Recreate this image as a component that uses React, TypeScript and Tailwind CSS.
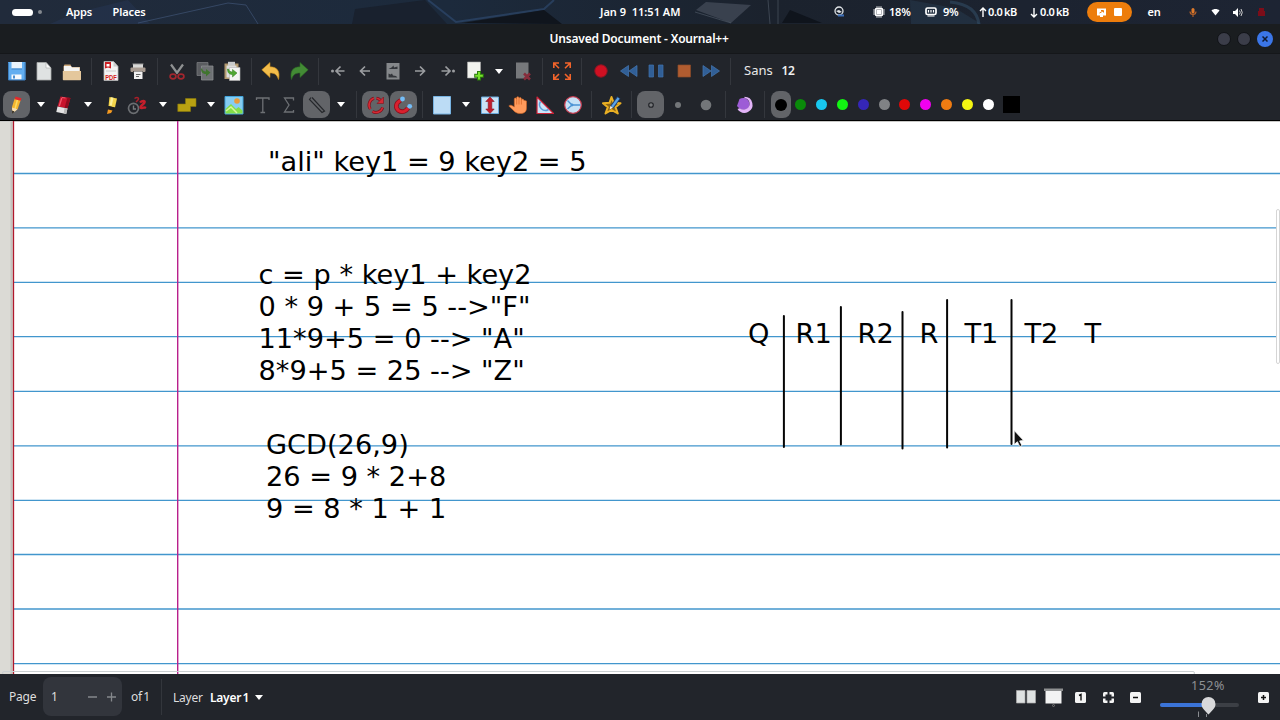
import React from 'react';
import clsx from 'clsx';

type IconProps = { children: React.ReactNode; size?: number; className?: string };

// every toolbar glyph is drawn on a 20x20 grid
function Icon({ children, size = 20, className }: IconProps) {
  return (
    <svg width={size} height={size} viewBox="0 0 20 20" fill="none" className={clsx('shrink-0', className)}>
      {children}
    </svg>
  );
}

function Slot({ children, active }: { children: React.ReactNode; active?: boolean }) {
  return (
    <button className="w-[27.5px] h-[27px] shrink-0 flex items-center justify-center">
      <span className={clsx('w-[27px] h-[27px] shrink-0 rounded-lg flex items-center justify-center', active && 'bg-[#626468]')}>
        {children}
      </span>
    </button>
  );
}

function Sep({ className = 'w-[11.5px]' }: { className?: string }) {
  return (
    <div className={clsx('shrink-0 flex justify-center', className)}>
      <div className="w-px h-[27px] bg-[#34373d]" />
    </div>
  );
}

function Caret() {
  return (
    <div className="w-5 shrink-0 flex justify-center">
      <svg width="8" height="5" viewBox="0 0 8 5"><path d="M0 0h8L4 5z" fill="#fff" /></svg>
    </div>
  );
}

const SaveIcon = () => (
  <Icon>
    <path d="M1 1h17.500v18H1z" fill="#62aef0" />
    <path d="M4.500 1h10.500v6.500H4.500z" fill="#e9f3fb" /><path d="M4.500 7.500h10.500v1H4.500z" fill="#3f82c4" />
    <path d="M4.500 13.500h10v5h-10z" fill="#f5f9fc" /><path d="M6 14.500h2v3H6z" fill="#4b8fd0" />
    <path d="M1.500 1.500v17.500h16.500v-17.500" stroke="#3d7fc0" />
  </Icon>
);
const NewIcon = () => (
  <Icon>
    <path d="M3 1.500h9l5 5.500v12H3z" fill="#dfe2e2" stroke="#a8abab" strokeWidth=".8" />
    <path d="M12 1.500V7h5z" fill="#fafafa" stroke="#a8abab" strokeWidth=".6" />
  </Icon>
);
const OpenIcon = () => (
  <Icon>
    <path d="M1.500 5.500l1-2h6l1 2.500h8.500v13H1.500z" fill="#cba678" /><path d="M2 5h7l1 1.500h7.500v4H2z" fill="#f4f4f2" />
    <path d="M.8 10h18.200v8.500q0 .7-.7.700H1.500q-.7 0-.7-.7z" fill="#e4c79c" />
  </Icon>
);
const PdfIcon = () => (
  <Icon>
    <path d="M3 .5h9.500l4.500 5v14H3z" fill="#f3f3f3" stroke="#b5b5b5" strokeWidth=".8" />
    <path d="M12.500.5v5H17z" fill="#ccc" /><path d="M4 1h6v6.500L7 6.500 4 7.500z" fill="#cc1e22" />
    <path d="M5.500 3h3v2.500h-3z" fill="#fff" /><path d="M5 10h10" stroke="#ccc" />
    <text x="10" y="18.500" textAnchor="middle" fontSize="7" fontWeight="700" textLength="11.5" lengthAdjust="spacingAndGlyphs" fontFamily="Liberation Sans, sans-serif" fill="#d4181c">PDF</text>
  </Icon>
);
const PrintIcon = () => (
  <Icon>
    <path d="M5 3h10v5H5z" fill="#d8d8d6" /><path d="M4.500 3h11" stroke="#9b9b9b" />
    <rect x="2.500" y="6.500" width="15" height="4.500" rx="1" fill="#a89b91" /><path d="M5 10h10v2H5z" fill="#4a4542" />
    <path d="M6 10.500h8.500v7.500H6z" fill="#f1f1f1" /><path d="M8 13.500h4.500M8 15.500h3" stroke="#666" />
  </Icon>
);
const CutIcon = () => (
  <Icon>
    <path d="M4 3.500l6.500 9M16 3.500l-6.500 9" stroke="#8f9192" strokeWidth="2.200" />
    <ellipse cx="6" cy="15.500" rx="2.900" ry="2.300" stroke="#a3262e" strokeWidth="1.700" /><ellipse cx="14" cy="15.500" rx="2.900" ry="2.300" stroke="#a3262e" strokeWidth="1.700" />
  </Icon>
);
const CopyIcon = () => (
  <Icon>
    <path d="M2 1.500h11v13H2z" fill="#5a5c60" stroke="#77797c" strokeWidth=".8" />
    <path d="M6.500 5h11.500v14H6.500z" fill="#6e7174" stroke="#8c8e90" strokeWidth=".8" />
    <path d="M6 7.500c0 4 2 5.500 5 5.500v2.500l4.500-4L11 8v2.500C9 10.500 7.500 9.500 7 7.500z" fill="#40752f" />
  </Icon>
);
const PasteIcon = () => (
  <Icon>
    <path d="M2.500 2.500h14V18h-14z" fill="#b39a70" /><path d="M6 .8h7v4H6z" fill="#c9cbcb" />
    <path d="M4.500 4.500h10v12h-10z" fill="#ddd" /><path d="M7.500 6.500H18v13H7.500z" fill="#f3f4f2" stroke="#b5b5b5" strokeWidth=".6" />
    <path d="M5.500 8c0 4 2 5.500 5 5.500v2.500l4.500-4-4.500-3.500v2.500C8.500 11 7 10 6.500 8z" fill="#50a832" stroke="#2e7c1c" strokeWidth=".5" />
  </Icon>
);
const Undo = ({ color, edge, flip }: { color: string; edge: string; flip?: boolean }) => (
  <Icon className={flip ? '-scale-x-100' : ''}>
    <path d="M9 1.500v4.300c7 0 10.500 4.500 8.500 12.700-1.500-4.500-3.500-6.500-8.500-6.500v4.500L.8 8.800z" fill={color} stroke={edge} strokeWidth=".6" />
  </Icon>
);
const Arrow = ({ flip, dot }: { flip?: boolean; dot?: boolean }) => (
  <Icon className={flip ? '-scale-x-100' : ''}>
    <path d={dot ? 'M16.500 10H8M12.500 5.500L8 10l4.500 4.500' : 'M15 10H5.500M10 5.500L5.500 10l4.500 4.500'} stroke="#9b9da0" strokeWidth="1.700" />
    {dot && <circle cx="4.500" cy="10" r="1.500" fill="#9b9da0" />}
  </Icon>
);
const NotePageIcon = () => (
  <Icon>
    <path d="M3.500 2h13v16.500h-13z" fill="#85888b" />
    <path d="M5.500 8l3-1.500 2-2 .5 2 3.500-1v2.500z" fill="#33363b" /><path d="M5.500 12.500l2 1 1.500-1 1 2 3 .5 1.500 1.500h-9z" fill="#33363b" />
  </Icon>
);
const AddPageIcon = () => (
  <Icon className="relative left-px">
    <path d="M1.500 1h13v16h-13z" fill="#f2f3ef" stroke="#aaa" strokeWidth=".6" />
    <path d="M13 10v9.500M8.200 14.700h9.600" stroke="#2a7b0c" strokeWidth="4" /><path d="M13 11v7.500M9.200 14.700h7.600" stroke="#79e22d" strokeWidth="2" />
  </Icon>
);
const DelPageIcon = () => (
  <Icon>
    <path d="M3 1.500h12.500v16H3z" fill="#76787b" /><path d="M11 12.500l6 6M17 12.500l-6 6" stroke="#862c3b" strokeWidth="2.600" />
  </Icon>
);
const FullscreenIcon = () => (
  <Icon>
    <path d="M1.800 7V2H7M2 2.200l5 5M13 2h5.200v5M18 2.200l-5 5M18.200 13v5.200H13M18 18l-5-5M7 18.200H1.800V13M2 18l5-5" stroke="#f2642b" strokeWidth="1.600" />
  </Icon>
);
const PencilIcon = () => (
  <Icon>
    <path d="M7.700 3.500l6 1.500-3 9-5.200 4-.5-6z" fill="#f5b52e" /><path d="M10.500 4.500L8 14" stroke="#fbdc65" strokeWidth="1.500" />
    <path d="M8.500 1.500l6 1.700-.8 2.500-6-1.500z" fill="#e02a2e" /><path d="M5 12.500l5.500 1.700-5 4.300z" fill="#f5deb5" /><path d="M5.200 15.500l2.300 1.200-2.200 2z" fill="#111" />
  </Icon>
);
const EraserIcon = () => (
  <Icon>
    <path d="M6.500 1.500l10 1.500-3 10.500L3.500 11.500z" fill="#c8142c" /><path d="M13.500 2.500l3 .5-3 10.500-3-.500z" fill="#8f0c1e" />
    <path d="M8 2.500l3.500.5" stroke="#f0596c" /><path d="M7.800 3l-2.500 8" stroke="#f0596c" strokeWidth="1.300" />
    <path d="M3.500 11.500l10 2-1.300 5.500L2.300 17z" fill="#e4e4e4" /><path d="M10.500 13l3 .5-1.300 5.500-2.500-.5z" fill="#b8b8b8" />
  </Icon>
);
const HighlighterIcon = () => (
  <Icon>
    <path d="M7.500 2l7.500 1.500-2 9-6.500-1.500z" fill="#f3d44b" /><path d="M9 2.300l2.500.5-1.800 8-2-.5z" fill="#fdf09a" />
    <path d="M6.300 11l6.500 1.500-1 2.500-5.500-1z" fill="#1f1f1f" /><path d="M6 14.500l4.500 1-1.500 2.500-4 1z" fill="#f59a20" />
  </Icon>
);
const DelStrokeIcon = () => (
  <Icon className="relative -left-0.5">
    <path d="M7.500 3.500c3-2 5.500-.500 3 2l-1.500 1.500" stroke="#a91f2a" strokeWidth="1.500" />
    <circle cx="6.500" cy="13.300" r="5" stroke="#6b6e72" strokeWidth="1.700" /><path d="M6.500 10.500v3.500h2.500" stroke="#777a7d" strokeWidth="1.400" />
    <path d="M13 7.500c2-2 5.500-2 4.500 0-.7 2-4.500 3-4 5 1 1.500 3-1 5.500 .5" stroke="#c51e2b" strokeWidth="2.400" />
  </Icon>
);
const ShapesIcon = () => (
  <Icon><path d="M8.500 3.500h10.500v8h-5.500v5H.8v-7.500h7.700z" fill="#b9a112" stroke="#8c7a0a" strokeWidth=".6" /></Icon>
);
const ImageIcon = () => (
  <Icon>
    <path d="M1 1.500h18v17.500H1z" fill="#86cdf2" stroke="#41a4dc" /><circle cx="13" cy="6" r="2.800" fill="#e99a3a" />
    <path d="M1.500 14l5.500-5 5 5 2.500-2 4 3.500v3h-17z" fill="#83dd48" /><path d="M2 16l5-4 6 6" stroke="#d8f5a0" strokeWidth="1.500" />
  </Icon>
);
const TextIcon = () => (
  <Icon className="relative left-px"><path d="M3.500 5V3H16V5M9.800 3v14.500M7.500 17.500h4.600" stroke="#6d7074" strokeWidth="1.300" /></Icon>
);
const SigmaIcon = () => (
  <Icon><path d="M14.500 5.500V3H5.500l4.500 7-4.500 7h9v-2" stroke="#6d7074" strokeWidth="1.300" /></Icon>
);
const LineIcon = () => (
  <Icon><path d="M4 2.500L2.500 4.500 15 17.500l2.500-1.500L5 2.500" stroke="#25272b" strokeWidth="1.200" /></Icon>
);
const RotateIcon = () => (
  <Icon>
    <path d="M8 3.300A7 7 0 0 0 4.300 14M6.500 16.500a7 7 0 0 0 10.200-4M10.500 3.200a7 7 0 0 1 4 2" stroke="#7f101c" strokeWidth="3" />
    <path d="M8 3.300A7 7 0 0 0 4.300 14M6.500 16.500a7 7 0 0 0 10.200-4M10.500 3.200a7 7 0 0 1 4 2" stroke="#d52a34" strokeWidth="1.600" />
    <path d="M17.500 2v6.500H11z" fill="#d52a34" stroke="#7f101c" strokeWidth=".6" />
  </Icon>
);
const MagnetIcon = () => (
  <Icon>
    <path d="M7.500 5.500C2 8.500 2.500 13 5.500 15.500c4 2.500 8 .5 9.500-2.500" stroke="#8c0e1c" strokeWidth="4.600" />
    <path d="M7.500 5.500C2 8.500 2.500 13 5.500 15.500c4 2.500 8 .5 9.500-2.500" stroke="#d9202e" strokeWidth="3" />
    <circle cx="9.500" cy="4" r="2.400" fill="#74bdf8" /><circle cx="16.700" cy="11.300" r="2.400" fill="#74bdf8" />
  </Icon>
);
const RectIcon = () => (
  <Icon><path d="M1.500 1.500h17v17.500h-17z" fill="#bcdcf5" stroke="#78b4e3" /></Icon>
);
const VSpaceIcon = () => (
  <Icon>
    <path d="M1.500 2h17v16.500h-17z" fill="#cbe2f5" stroke="#69a9dc" />
    <path d="M10 2l4.200 4.500h-2.400v7.500h2.400L10 18.500 5.800 14h2.400V6.500H5.800z" fill="#c41c2c" stroke="#871422" strokeWidth=".6" />
  </Icon>
);
const HandIcon = () => (
  <Icon className="relative left-px">
    <path d="M.8 11c1-1.500 3-1 5.500 1V4c0-1.500 2-1.500 2.300 0V2.800c0-1.500 2.200-1.500 2.400 0V3.500c.3-1.500 2.300-1.300 2.400.2V5c.3-1.400 2.300-1.200 2.400.3L18.500 6v7c0 4-2.500 5.500-6 5.500-4.500 0-6-2-8-4z" fill="#ff9b5c" stroke="#cf6322" strokeWidth=".6" />
    <path d="M8.700 4v5.500M11 4v5.500M13.400 5v4.500" stroke="#d9692b" strokeWidth=".8" />
  </Icon>
);
const SetSquareIcon = () => (
  <Icon>
    <path d="M2 2l16.500 16.500H2z" fill="#cde6f8" stroke="#cc2438" strokeWidth="1.200" strokeLinejoin="round" />
    <path d="M5.500 6.500A5.800 5.800 0 0 0 13.500 14.500" stroke="#5aa0dc" strokeWidth="1.500" />
  </Icon>
);
const CompassIcon = () => (
  <Icon className="relative left-px">
    <circle cx="10" cy="10" r="8.300" fill="#c7e2f6" stroke="#cc3e52" strokeWidth="1.200" />
    <path d="M4.500 5.500l4.500 4.500h8.500M9 10l-4.500 4" stroke="#4b93d4" strokeWidth="1.400" /><circle cx="9" cy="10" r="1.400" fill="#4b93d4" />
  </Icon>
);
const StarIcon = () => (
  <Icon className="relative left-px">
    <path d="M9.500 2l2.200 5.800 6.800.4-5 4 2.300 6.300-6.300-3.500-6 3.500 2.300-6.300-4.800-4 6.500-.4z" fill="#8a6414" stroke="#eab024" strokeWidth="2" strokeLinejoin="round" />
    <path d="M16.800 2.500l-6.800 9.500" stroke="#1c3f72" strokeWidth="4" /><path d="M16.600 3l-6.600 9" stroke="#5ba4e8" strokeWidth="2.200" /><path d="M8.500 11L7.500 14.500l3.300-1.700z" fill="#eee" />
  </Icon>
);
const PieIcon = () => (
  <Icon>
    <path d="M4.500 4C9 1.500 14 4 14.500 9c.3 4-3.500 6.500-7.500 5.500-2-.5-3.500-1.500-5-3.500z" fill="#9d5cd6" />
    <path d="M9.500 1.800A8 8 0 0 1 13 17C9 19 4.500 17.500 2.500 14l2-.8c6 3.500 12-1 9.500-7-1-2-2.500-2.700-4.500-2.900z" fill="#e3b4f8" />
  </Icon>
);
const Ff = ({ flip }: { flip?: boolean }) => (
  <Icon className={flip ? '-scale-x-100' : ''}>
    <path d="M2 4.500l8 5.500-8 5.500zM10.500 4.500l8 5.500-8 5.500z" fill="#315f96" stroke="#4579b4" strokeWidth=".7" />
  </Icon>
);
const Dot = ({ r, hollow }: { r: number; hollow?: boolean }) => (
  <Icon><circle cx="10" cy="10" r={r} fill={hollow ? '#77797c' : '#737679'} stroke={hollow ? '#202226' : 'none'} strokeWidth="1.100" /></Icon>
);

const palette = ['#0a8a0a', '#18c8f0', '#12f512', '#3526b8', '#808285', '#e00808', '#f000f0', '#f07c12', '#f5f512', '#ffffff'];

function TopPanel() {
  return (
    <div className="relative h-6 shrink-0 overflow-hidden bg-[#1c2533] text-[11px] font-semibold text-white">
      <svg className="absolute inset-0" width="1280" height="24">
        <defs>
          <linearGradient id="sky" x1="0" x2="1" y1="0" y2="0">
            <stop offset="0" stopColor="#212b3b" /><stop offset=".35" stopColor="#1c2a3c" /><stop offset=".6" stopColor="#1b222d" /><stop offset="1" stopColor="#1d2433" />
          </linearGradient>
        </defs>
        <path d="M0 0h1280v24H0z" fill="url(#sky)" />
        <path d="M50 24L75 13 128 0 150 24z" fill="#28395a" opacity=".4" />
        <path d="M138 23L228 3l18 2 12 19" stroke="#4b638c" fill="none" opacity=".5" />
        <path d="M355 9l70-9 22 24h-95z" fill="#19212e" /><path d="M428 0l28 22 88-13 10-9" stroke="#34537f" strokeWidth="2" fill="none" opacity=".5" />
        <path d="M462 23l82-13 18 14z" fill="#10151d" />
        <path d="M696 10l10-8 45 3-20 18z" fill="#4a525f" opacity=".65" /><path d="M695 12l36 11M768 0l2 24M778 0v24" stroke="#65707f" fill="none" opacity=".45" />
        <path d="M790 10l32 13h-40z" fill="#0f141c" /><path d="M910 0l45 8 26 16h-70z" fill="#2b4157" opacity=".4" />
        <path d="M950 2c20 2 27 10 29 22" stroke="#3d607d" strokeWidth="3" fill="none" opacity=".4" />
      </svg>
      <div className="relative h-full flex items-center">
        <div className="ml-3 w-[21px] h-[7px] rounded-full bg-white" />
        <div className="ml-[5px] w-1 h-1 rounded-full bg-[#84898f]" />
        <span className="ml-6 w-[46.5px] tracking-[-0.1px]">Apps</span>
        <span className="w-[487.500px] tracking-[-0.1px]">Places</span>
        <span className="w-[233px] whitespace-pre">Jan 9  11:51 AM</span>
        <svg width="12" height="12" viewBox="0 0 12 12" fill="none"><circle cx="6" cy="5" r="4" stroke="#dfe3e6" strokeWidth="1.300" /><path d="M3 5l3-1 3 2-3 1z" fill="#dfe3e6" /><path d="M5 9.500h6" stroke="#3d6fb8" strokeWidth="2" /></svg>
        <svg className="ml-7" width="12" height="12" viewBox="0 0 12 12" fill="none"><rect x="2.500" y="2.500" width="7" height="7" rx="1" stroke="#fff" strokeWidth="1.500" /><path d="M4 0v12M6 0v12M8 0v12M0 4h12M0 6h12M0 8h12" stroke="#fff" strokeWidth=".7" /><path d="M4 4h4v4H4z" fill="#fff" /></svg>
        <span className="ml-1 w-9 text-[11px] tracking-[-0.2px]">18%</span>
        <svg width="12" height="10" viewBox="0 0 12 10" fill="none"><rect x="1" y="1" width="10" height="6.500" rx="1.500" stroke="#fff" strokeWidth="1.700" /><path d="M3.500 3v2.500M6 3v2.500M8.500 3v2.500M2.500 9h7" stroke="#fff" strokeWidth="1.200" /></svg>
        <span className="ml-1.5 w-[36px] tracking-[-0.2px]">9%</span>
        <svg width="8" height="11" viewBox="0 0 8 11" fill="none"><path d="M4 10V1M1 4l3-3 3 3" stroke="#fff" strokeWidth="1.400" /></svg>
        <span className="ml-px w-[42px] whitespace-nowrap [word-spacing:-1px] tracking-[-0.4px]">0.0 kB</span>
        <svg width="8" height="11" viewBox="0 0 8 11" fill="none"><path d="M4 1v9M1 7l3 3 3-3" stroke="#fff" strokeWidth="1.400" /></svg>
        <span className="ml-0.5 w-[47px] whitespace-nowrap [word-spacing:-1px] tracking-[-0.4px]">0.0 kB</span>
        <div className="w-[45px] h-5 rounded-full bg-[#ed7d0c] flex items-center justify-center gap-2">
          <svg width="9" height="9" viewBox="0 0 9 9" fill="none"><path d="M0 .5h9v7H6v1.500H3v-1.500H0z" fill="#fff" /><path d="M2.500 5L6 3M4 2.500h2.500V4.500" stroke="#ed7d0c" /></svg>
          <div className="w-2 h-2 rounded-[1px] bg-white" />
        </div>
        <span className="ml-[15.500px] w-[40.500px] tracking-[-0.3px]">en</span>
        <svg className="ml-px" width="8" height="9" viewBox="0 0 8 9" fill="none"><rect x="2.500" width="3" height="5.500" rx="1.500" fill="#e07a2a" /><path d="M1 3.500c0 4 6 4 6 0M4 6.500V9" stroke="#b8622a" strokeWidth="1.100" /></svg>
        <svg className="ml-3.5" width="9" height="7" viewBox="0 0 9 7"><path d="M.5 1.500c2-2 6-2 8 0l-4 5z" fill="#fff" /></svg>
        <svg className="ml-[13px]" width="10" height="9" viewBox="0 0 10 9" fill="none"><path d="M0 3h2l3-3v9L2 6H0z" fill="#fff" /><path d="M6.500 2.500q1.500 2 0 4M8 1q2.500 3.500 0 7" stroke="#d0d0d0" /></svg>
        <svg className="ml-[15px]" width="7" height="8" viewBox="0 0 7 8"><path d="M1 0h5v3h1v5H0V3h1z" fill="#7c0d19" /></svg>
      </div>
    </div>
  );
}

function TitleBar() {
  return (
    <div className="h-[30px] shrink-0 flex items-center bg-[#1a1d20] border-b border-[#15171a] text-white">
      <span className="ml-[549.5px] flex-1 pt-px text-[12px] font-semibold tracking-[-0.19px]">Unsaved Document - Xournal++</span>
      <div className="flex items-center gap-1.5 mr-[7px]">
        <div className="w-3.5 h-3.5 rounded-full bg-[#3b3d49] border border-[#101216]" />
        <div className="w-3.5 h-3.5 rounded-full bg-[#3b3d49] border border-[#101216]" />
        <div className="w-4 h-4 rounded-full bg-[#3b76e8] flex items-center justify-center">
          <svg width="6" height="6" viewBox="0 0 6 6"><path d="M.5.5l5 5M5.500.5l-5 5" stroke="#101b33" strokeWidth="1.500" /></svg>
        </div>
      </div>
    </div>
  );
}

function Toolbars() {
  return (
    <div className="h-[67px] shrink-0 bg-[#22252b] border-b border-black pt-[3.5px]">
      <div className="h-[27px] flex items-center pl-[3px]">
        <Slot><SaveIcon /></Slot>
        <Slot><NewIcon /></Slot>
        <Slot><OpenIcon /></Slot>
        <Sep />
        <Slot><PdfIcon /></Slot>
        <Slot><PrintIcon /></Slot>
        <Sep />
        <Slot><CutIcon /></Slot>
        <Slot><CopyIcon /></Slot>
        <Slot><PasteIcon /></Slot>
        <Sep />
        <Slot><Undo color="#f3bd4a" edge="#c48a1c" /></Slot>
        <Slot><Undo color="#438b35" edge="#2c6b23" flip /></Slot>
        <Sep />
        <Slot><Arrow dot /></Slot>
        <Slot><Arrow /></Slot>
        <Slot><NotePageIcon /></Slot>
        <Slot><Arrow flip /></Slot>
        <Slot><Arrow flip dot /></Slot>
        <Slot><AddPageIcon /></Slot>
        <Caret />
        <Slot><DelPageIcon /></Slot>
        <Sep className="w-3" />
        <Slot><FullscreenIcon /></Slot>
        <Sep />
        <Slot><Icon><circle cx="10" cy="10" r="6.200" fill="#cf1022" stroke="#8d1522" /></Icon></Slot>
        <Slot><Ff flip /></Slot>
        <Slot><Icon><path d="M3 4h4.500v12H3zM12.500 4H17v12h-4.500z" fill="#315f96" stroke="#3f73b0" strokeWidth=".7" /></Icon></Slot>
        <Slot><Icon><path d="M4 4h12.500v12H4z" fill="#b05c30" stroke="#8d4a28" strokeWidth=".7" /></Icon></Slot>
        <Slot><Ff /></Slot>
        <Sep />
        <span className="ml-[7.500px] w-[37.500px] text-[13px] text-[#e8e8e8]">Sans</span>
        <span className="text-[12px] font-semibold text-[#f0f0f0] tracking-[-0.4px]">12</span>
      </div>
      <div className="mt-[6.5px] h-[27px] flex items-center pl-[3px]">
        <Slot active><PencilIcon /></Slot>
        <Caret />
        <Slot><EraserIcon /></Slot>
        <Caret />
        <Slot><HighlighterIcon /></Slot>
        <Slot><DelStrokeIcon /></Slot>
        <Caret />
        <Slot><ShapesIcon /></Slot>
        <Caret />
        <Slot><ImageIcon /></Slot>
        <Slot><TextIcon /></Slot>
        <Slot><SigmaIcon /></Slot>
        <Slot active><LineIcon /></Slot>
        <Caret />
        <Sep />
        <Slot active><RotateIcon /></Slot>
        <Slot active><MagnetIcon /></Slot>
        <Sep />
        <Slot><RectIcon /></Slot>
        <Caret />
        <Slot><VSpaceIcon /></Slot>
        <Slot><HandIcon /></Slot>
        <Slot><SetSquareIcon /></Slot>
        <Slot><CompassIcon /></Slot>
        <Sep />
        <Slot><StarIcon /></Slot>
        <Sep className="w-3" />
        <Slot active><Dot r={2.3} hollow /></Slot>
        <Slot><Dot r={3} /></Slot>
        <Slot><Dot r={5.3} /></Slot>
        <Sep />
        <Slot><PieIcon /></Slot>
        <Sep className="w-3" />
        <div className="w-5 h-[27px] rounded-lg bg-[#626468] flex items-center justify-center">
          <div className="w-3 h-3 rounded-full bg-black" />
        </div>
        {palette.map(c => (
          <div key={c} className="w-[20.8px] flex justify-center">
            <div className="w-[11px] h-[11px] rounded-full" style={{ backgroundColor: c }} />
          </div>
        ))}
        <div className="ml-[5px] w-[17px] h-[17px] bg-black" />
      </div>
    </div>
  );
}

const rules = [52.5, 106.8, 161.3, 215.6, 270.3, 324.8, 379.3, 433.5, 488, 542.7];
const strokes = [
  [783.9, 195, 326], [840.9, 186, 323.5], [902.5, 191, 327.5], [947.1, 179, 326.5], [1011.5, 179, 323],
];
const headers: [string, string][] = [
  ['Q', 'left-[748px]'], ['R1', 'left-[795.5px]'], ['R2', 'left-[857.5px]'], ['R', 'left-[919.5px]'],
  ['T1', 'left-[964.5px]'], ['T2', 'left-[1024.5px]'], ['T', 'left-[1084.5px]'],
];

function Note({ className, lines }: { className: string; lines: string[] }) {
  return (
    <div className={clsx('absolute whitespace-pre', className)}>
      {lines.map(l => <div key={l}>{l}</div>)}
    </div>
  );
}

function Paper() {
  return (
    <div className="relative flex-1 overflow-hidden bg-white text-black text-[27.2px] leading-[32px] font-['DejaVu_Sans',sans-serif]">
      <svg className="absolute inset-0" width="1280" height="553">
        <path d="M0 0h13v553H0z" fill="#dbdad5" />
        <path d="M11.500 0v553" stroke="#c4c3be" strokeWidth="2" />
        <path d="M0 .5h1280" stroke="#c9c9c7" />
        {rules.map(y => <path key={y} d={`M14 ${y}H1280`} stroke="#4296cd" strokeWidth="1.300" />)}
        <path d="M13.500 0v553" stroke="#b0182c" strokeWidth="1.300" />
        <path d="M177.700 0v553" stroke="#b8208c" strokeWidth="1.400" />
      </svg>
      <Note className="left-[268px] top-[25px]" lines={['"ali" key1 = 9 key2 = 5']} />
      <Note className="left-[258.5px] top-[138px]" lines={['c = p * key1 + key2', '0 * 9 + 5 = 5 -->"F"', '11*9+5 = 0 --> "A"', '8*9+5 = 25 --> "Z"']} />
      <Note className="left-[266px] top-[308px]" lines={['GCD(26,9)', '26 = 9 * 2+8', '9 = 8 * 1 + 1']} />
      {headers.map(([label, pos]) => <Note key={label} className={clsx('top-[197px]', pos)} lines={[label]} />)}
      <svg className="absolute inset-0" width="1280" height="553">
        {strokes.map(([x, y1, y2]) => <path key={x} d={`M${x} ${y1}V${y2}`} stroke="#050505" strokeWidth="2" strokeLinecap="round" />)}
        <path d="M1014.200 309.500v14l3.200-2.800 2.400 5 2.200-1.200-2.400-4.600 4-.400z" fill="#111" stroke="#fff" strokeWidth=".8" />
      </svg>
      <div className="absolute right-0 top-[88px] w-1 h-[155px] rounded-sm border border-[#d5d5d5] bg-white" />
      <div className="absolute left-0.5 -bottom-px w-[1193px] h-1 rounded-sm border border-[#cbd0d2]" />
    </div>
  );
}

function StatusBar() {
  return (
    <div className="h-[46px] shrink-0 flex items-center bg-[#22252b] text-[12px] text-[#dedede]">
      <span className="ml-[9px] w-[34px] tracking-[-0.2px]">Page</span>
      <div className="w-[79px] h-[39px] mb-px rounded-lg bg-[#32353c] flex items-center">
        <span className="ml-2 w-9">1</span>
        <svg width="30" height="10" viewBox="0 0 30 10"><path d="M1 5h9M20 5h9M24.500.5v9" stroke="#85888c" strokeWidth="1.300" /></svg>
      </div>
      <span className="ml-[9px] w-[26px] text-[12px] whitespace-nowrap [word-spacing:-1.6px] tracking-[-0.2px]">of 1</span>
      <div className="ml-1 w-px h-9 bg-[#33363c]" />
      <span className="ml-[11px] w-[37px] pt-px tracking-[-0.2px]">Layer</span>
      <span className="w-[45px] pt-px font-semibold text-[12px] whitespace-nowrap [word-spacing:-1.5px] tracking-[-0.25px] text-white">Layer 1</span>
      <svg width="8" height="5" viewBox="0 0 8 5"><path d="M0 0h8L4 5z" fill="#fff" /></svg>
      <div className="flex-1" />
      <svg width="20" height="14" viewBox="0 0 20 14"><path d="M.5.5h8.500v12.500H.5zM11 .5h8.500v12.500H11z" fill="#dfe2e2" stroke="#aaa" strokeWidth=".7" /></svg>
      <svg className="ml-2" width="19" height="19" viewBox="0 0 19 19"><path d="M1.500 3h16v12.500h-16z" fill="#f2f3f3" /><path d="M0 .5h19v2.500H0z" fill="#8f9192" /><circle cx="9.500" cy="17.500" r="1" stroke="#777" fill="none" /></svg>
      <svg className="ml-3" width="11" height="11" viewBox="0 0 11 11"><rect width="11" height="11" rx="1.500" fill="#f4f4f4" /><path d="M4 3.500L6 2.500v6" stroke="#111" strokeWidth="1.400" fill="none" /></svg>
      <svg className="ml-[17px]" width="11" height="11" viewBox="0 0 11 11"><rect width="11" height="11" rx="1.500" fill="#f4f4f4" /><path d="M2.500 2.500h6v6h-6zM4.500 0h2v2.500h-2zM4.500 8.500h2V11h-2zM0 4.500h2.500v2H0zM8.500 4.500H11v2H8.500z" fill="#22252b" /></svg>
      <svg className="ml-4" width="11" height="11" viewBox="0 0 11 11"><rect width="11" height="11" rx="1.500" fill="#f4f4f4" /><path d="M3 5.500h5" stroke="#111" strokeWidth="1.500" /></svg>
      <div className="ml-[19px] w-[79px] h-full flex flex-col">
        <span className="ml-[31.500px] mt-1 leading-4 text-[#8e9195] text-[12.500px] tracking-[0.5px] whitespace-nowrap">152%</span>
        <svg className="mt-0.5" width="79" height="22" viewBox="0 0 79 22">
          <rect y="7" width="79" height="4" rx="2" fill="#3c3f45" /><rect y="7" width="48" height="4" rx="2" fill="#3b74d8" />
          <path d="M38.500 15.500v5.500M46.500 18v3" stroke="#8a8d91" />
          <path d="M48.500 1a7 7 0 0 1 7 7.200c0 4-4.500 7.300-7 10.300-2.500-3-7-6.300-7-10.300a7 7 0 0 1 7-7.200z" fill="#d8d8da" />
        </svg>
      </div>
      <svg className="ml-[19px] mr-[11.500px]" width="11" height="11" viewBox="0 0 11 11"><rect width="11" height="11" rx="1.500" fill="#f4f4f4" /><path d="M3 5.500h5M5.500 3v5" stroke="#111" strokeWidth="1.500" /></svg>
    </div>
  );
}

export default function App() {
  return (
    <div className="w-[1280px] h-[720px] overflow-hidden flex flex-col bg-[#22252b] font-['Noto_Sans',sans-serif]">
      <TopPanel />
      <TitleBar />
      <Toolbars />
      <Paper />
      <StatusBar />
    </div>
  );
}
